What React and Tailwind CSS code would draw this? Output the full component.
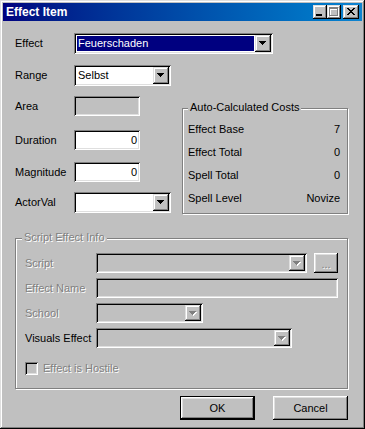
import React from "react";

const SUNKEN =
  "shadow-[inset_1px_1px_#808080,inset_-1px_-1px_#ffffff,inset_2px_2px_#000000,inset_-2px_-2px_#dfdfdf]";
const RAISED =
  "shadow-[inset_-1px_-1px_#000000,inset_1px_1px_#ffffff,inset_-2px_-2px_#808080,inset_2px_2px_#dfdfdf]";
const COMBOBTN =
  "shadow-[inset_-1px_-1px_#000000,inset_1px_1px_#dfdfdf,inset_-2px_-2px_#808080,inset_2px_2px_#ffffff]";
const ETCHED = "border border-[#808080] shadow-[inset_1px_1px_#ffffff,1px_1px_#ffffff]";
const DIS = "text-[#808080] [text-shadow:1px_1px_0_#ffffff]";

const ARROW = "M0 0h7v1H0zM1 1h5v1H1zM2 2h3v1H2zM3 3h1v1H3z";

function Arrow({ disabled }) {
  return (
    <svg width="8" height="5" viewBox="0 0 8 5" shapeRendering="crispEdges">
      {disabled && <path d={ARROW} fill="#ffffff" transform="translate(1,1)" />}
      <path d={ARROW} fill={disabled ? "#808080" : "#000000"} />
    </svg>
  );
}

function Combo({ className, value, selected, disabled }) {
  return (
    <div
      className={`flex p-[2px] ${SUNKEN} ${disabled ? "bg-[#c0c0c0]" : "bg-white"} ${className}`}
    >
      <div className="flex-1 min-w-0 flex p-[1px]">
        {value && (
          <div
            className={`flex-1 flex items-center pl-[1px] whitespace-nowrap ${
              selected ? "bg-[#000080] text-white" : "text-black"
            }`}
          >
            {value}
          </div>
        )}
      </div>
      <div className={`w-[16px] flex items-center justify-center bg-[#c0c0c0] ${COMBOBTN}`}>
        <Arrow disabled={disabled} />
      </div>
    </div>
  );
}

function Edit({ className, value, disabled }) {
  return (
    <div
      className={`flex items-center justify-end pr-[3px] ${SUNKEN} ${
        disabled ? "bg-[#c0c0c0]" : "bg-white"
      } ${className}`}
    >
      {value}
    </div>
  );
}

function TitleButton({ className, children }) {
  return (
    <div className={`h-[14px] flex items-center justify-center bg-[#c0c0c0] ${COMBOBTN} ${className}`}>
      {children}
    </div>
  );
}

const MAXP = "M0 0h9v2H0zM0 2h1v7H0zM8 2h1v7H8zM0 8h9v1H0z";
const CLOSEP =
  "M0 0h2v1H0zM6 0h2v1H6zM1 1h2v1H1zM5 1h2v1H5zM2 2h4v1H2zM3 3h2v1H3zM2 4h4v1H2zM1 5h2v1H1zM5 5h2v1H5zM0 6h2v1H0zM6 6h2v1H6z";

export default function App() {
  return (
    <div className="w-[365px] h-[429px] bg-[#c0c0c0] p-[3px] flex flex-col font-['Liberation_Sans',Arial,sans-serif] text-[11px] leading-[13px] text-black shadow-[inset_-1px_-1px_#000000,inset_1px_1px_#dfdfdf,inset_-2px_-2px_#808080,inset_2px_2px_#ffffff]">
      {/* Title bar */}
      <div className="h-[18px] flex items-center pl-[3px] bg-linear-to-r from-[#000080] to-[#1084d0]">
        <span className="text-white font-bold text-[12px] leading-[14px] whitespace-nowrap">Effect Item</span>
        <div className="ml-auto mr-[3px] flex items-center">
          <TitleButton className="w-[14px]">
            <svg width="14" height="14" viewBox="0 0 14 14" shapeRendering="crispEdges">
              <rect x="3" y="9" width="6" height="2" fill="#000000" />
            </svg>
          </TitleButton>
          <TitleButton className="w-[14px]">
            <svg width="14" height="14" viewBox="0 0 14 14" shapeRendering="crispEdges">
              <path d={MAXP} fill="#ffffff" transform="translate(3,3)" />
              <path d={MAXP} fill="#808080" transform="translate(2,2)" />
            </svg>
          </TitleButton>
          <TitleButton className="w-[16px] ml-[2px]">
            <svg width="16" height="14" viewBox="0 0 16 14" shapeRendering="crispEdges">
              <path d={CLOSEP} fill="#000000" transform="translate(4,3)" />
            </svg>
          </TitleButton>
        </div>
      </div>

      {/* Body */}
      <div className="flex flex-col pl-[12px]">
        <div className="flex items-center mt-[12px]">
          <span className="w-[59px]">Effect</span>
          <Combo className="w-[199px] h-[21px]" value="Feuerschaden" selected />
        </div>
        <div className="flex items-center mt-[11px]">
          <span className="w-[59px]">Range</span>
          <Combo className="w-[97px] h-[21px]" value="Selbst" />
        </div>

        <div className="flex items-start mt-[10px]">
          <div className="flex flex-col w-[167px]">
            <div className="flex items-center">
              <span className="w-[59px]">Area</span>
              <Edit className="w-[66px] h-[20px]" disabled />
            </div>
            <div className="flex items-center mt-[14px]">
              <span className="w-[59px]">Duration</span>
              <Edit className="w-[66px] h-[20px]" value="0" />
            </div>
            <div className="flex items-center mt-[12px]">
              <span className="w-[59px]">Magnitude</span>
              <Edit className="w-[66px] h-[20px]" value="0" />
            </div>
            <div className="flex items-center mt-[10px]">
              <span className="w-[59px]">ActorVal</span>
              <Combo className="w-[97px] h-[21px]" value="" />
            </div>
          </div>

          <div className={`relative mt-[12px] w-[166px] h-[106px] ${ETCHED}`}>
            <span className="absolute -top-[8px] left-[5px] px-[2px] bg-[#c0c0c0] whitespace-nowrap">
              Auto-Calculated Costs
            </span>
            <div className="flex flex-col pt-[9px] pl-[5px] pr-[7px]">
              <div className="h-[23px] flex items-center justify-between">
                <span>Effect Base</span>
                <span>7</span>
              </div>
              <div className="h-[23px] flex items-center justify-between">
                <span>Effect Total</span>
                <span>0</span>
              </div>
              <div className="h-[23px] flex items-center justify-between">
                <span>Spell Total</span>
                <span>0</span>
              </div>
              <div className="h-[23px] flex items-center justify-between">
                <span>Spell Level</span>
                <span>Novize</span>
              </div>
            </div>
          </div>
        </div>

        {/* Script Effect Info */}
        <div className={`relative mt-[24px] w-[333px] h-[151px] ${ETCHED}`}>
          <span className={`absolute -top-[8px] left-[6px] px-[2px] bg-[#c0c0c0] whitespace-nowrap ${DIS}`}>
            Script Effect Info
          </span>
          <div className="flex flex-col pt-[14px] pl-[9px]">
            <div className="flex items-center">
              <span className={`w-[71px] ${DIS}`}>Script</span>
              <Combo className="w-[211px] h-[20px]" disabled />
              <div
                className={`ml-[7px] w-[24px] h-[20px] flex items-center justify-center pt-[3px] bg-[#c0c0c0] ${RAISED} ${DIS}`}
              >
                ...
              </div>
            </div>
            <div className="flex items-center mt-[5px]">
              <span className={`w-[71px] ${DIS}`}>Effect Name</span>
              <Edit className="w-[242px] h-[20px]" disabled />
            </div>
            <div className="flex items-center mt-[5px]">
              <span className={`w-[71px] ${DIS}`}>School</span>
              <Combo className="w-[107px] h-[20px]" disabled />
            </div>
            <div className="flex items-center mt-[5px]">
              <span className="w-[71px] whitespace-nowrap">Visuals Effect</span>
              <Combo className="w-[196px] h-[20px]" disabled />
            </div>
            <div className="flex items-center mt-[14px] h-[13px]">
              <div className={`w-[13px] h-[13px] bg-[#c0c0c0] ${SUNKEN}`} />
              <span className={`ml-[5px] ${DIS}`}>Effect is Hostile</span>
            </div>
          </div>
        </div>

        {/* Buttons */}
        <div className="flex mt-[7px] ml-[165px] gap-[18px]">
          <div className="w-[75px] h-[24px] border border-black flex">
            <div className={`flex-1 flex items-center justify-center bg-[#c0c0c0] ${RAISED}`}>OK</div>
          </div>
          <div className={`w-[75px] h-[24px] flex items-center justify-center bg-[#c0c0c0] ${RAISED}`}>
            Cancel
          </div>
        </div>
      </div>
    </div>
  );
}
